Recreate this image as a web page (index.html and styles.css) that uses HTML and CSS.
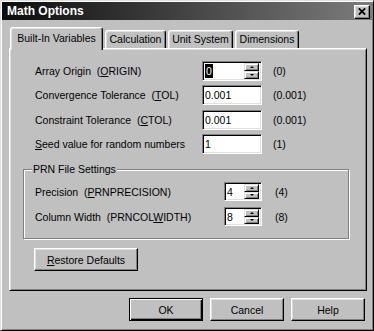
FILE: index.html
```html
<!DOCTYPE html>
<html lang="en">
<head>
    <meta charset="UTF-8">
    <title>Math Options</title>
    <link rel="stylesheet" href="styles.css">
</head>
<body>
    <div class="window">
        <div class="titlebar">
            <span class="title">Math Options</span>
            <button class="close" type="button">
                <svg width="8" height="7" viewBox="0 0 8 7"><path d="M0.8 0.3 L7.2 6.7 M7.2 0.3 L0.8 6.7" stroke="#000" stroke-width="1.7" fill="none"/></svg>
            </button>
        </div>
        <div class="content">
            <div class="tabs">
                <div class="tab active tab-vars">Built-In Variables</div>
                <div class="tab tab-calc">Calculation</div>
                <div class="tab tab-unit">Unit System</div>
                <div class="tab tab-dim">Dimensions</div>
            </div>
            <div class="panel">
                <div class="fields">
                    <label>Array Origin&nbsp; (<u>O</u>RIGIN)</label>
                    <div class="field spin"><span class="text"><span class="sel">0</span></span><span class="arrows"><span class="arrow"><i class="up"></i></span><span class="arrow"><i class="down"></i></span></span></div>
                    <span class="def">(0)</span>

                    <label>Convergence Tolerance&nbsp; (<u>T</u>OL)</label>
                    <div class="field"><span class="text">0.001</span></div>
                    <span class="def">(0.001)</span>

                    <label>Constraint Tolerance&nbsp; (<u>C</u>TOL)</label>
                    <div class="field"><span class="text">0.001</span></div>
                    <span class="def">(0.001)</span>

                    <label><u>S</u>eed value for random numbers</label>
                    <div class="field"><span class="text">1</span></div>
                    <span class="def">(1)</span>
                </div>

                <fieldset class="group">
                    <legend>PRN File Settings</legend>
                    <div class="group-fields">
                        <label>Precision&nbsp; (<u>P</u>RNPRECISION)</label>
                        <div class="field spin"><span class="text">4</span><span class="arrows"><span class="arrow"><i class="up"></i></span><span class="arrow"><i class="down"></i></span></span></div>
                        <span class="def">(4)</span>

                        <label>Column Width&nbsp; (PRNCOL<u>W</u>IDTH)</label>
                        <div class="field spin"><span class="text">8</span><span class="arrows"><span class="arrow"><i class="up"></i></span><span class="arrow"><i class="down"></i></span></span></div>
                        <span class="def">(8)</span>
                    </div>
                </fieldset>

                <button class="btn restore" type="button"><u>R</u>estore Defaults</button>
            </div>
            <div class="actions">
                <button class="btn default" type="button">OK</button>
                <button class="btn" type="button">Cancel</button>
                <button class="btn" type="button">Help</button>
            </div>
        </div>
    </div>
</body>
</html>
```

FILE: styles.css
```css
* {
    box-sizing: border-box;
}

body {
    margin: 0;
    font-family: "Liberation Sans", Arial, sans-serif;
    font-size: 10.5px;
    color: #000;
    background: #c0c0c0;
}

.window {
    width: 374px;
    height: 331px;
    background: #c0c0c0;
    border: 1px solid;
    border-color: #dfdfdf #000 #000 #dfdfdf;
    box-shadow: inset 1px 1px #fff, inset -1px -1px #808080;
    padding: 1px;
    display: flex;
    flex-direction: column;
}

.titlebar {
    height: 18px;
    display: flex;
    align-items: center;
    justify-content: space-between;
    padding: 0 2px 0 5px;
    background: linear-gradient(to right, #0c0c0c, #7c7c7c);
    color: #fff;
}

.title {
    font-weight: bold;
    font-size: 12px;
}

.close {
    width: 16px;
    height: 14px;
    padding: 0;
    margin-top: 1px;
    display: flex;
    align-items: center;
    justify-content: center;
    background: #c0c0c0;
    border: 1px solid;
    border-color: #fff #000 #000 #fff;
    box-shadow: inset -1px -1px #808080, inset 1px 1px #dfdfdf;
}

.content {
    padding: 7px 5px 0 7px;
}

/* tab strip */
.tabs {
    display: flex;
    align-items: flex-end;
    gap: 2px;
    height: 21px;
    padding-left: 1px;
}

.tab {
    height: 18px;
    line-height: 16px;
    text-align: center;
    border: 1px solid;
    border-bottom: none;
    border-color: #fff #000 transparent #fff;
    border-radius: 3px 3px 0 0;
    box-shadow: inset -1px 0 #808080, inset 1px 1px #dfdfdf;
    background: #c0c0c0;
}

.tab.active {
    position: relative;
    z-index: 1;
    height: 23px;
    line-height: 20px;
    margin-bottom: -2px;
}

.tab-vars { width: 93px; }
.tab-calc { width: 61px; }
.tab-unit { width: 65px; }
.tab-dim { width: 64px; }

.panel {
    height: 243px;
    padding: 12px 0 0 25px;
    border: 1px solid;
    border-color: #fff #000 #000 #fff;
    box-shadow: inset 1px 1px #dfdfdf, inset -1px -1px #808080;
}

.fields {
    display: grid;
    grid-template-columns: 167px 60px auto;
    grid-auto-rows: 20px;
    row-gap: 4.35px;
    align-items: center;
}

.def {
    margin-left: 11px;
}

/* sunken edit box */
.field {
    height: 100%;
    display: flex;
    align-items: center;
    padding: 0 2px;
    background: #fff;
    border: 1px solid;
    border-color: #808080 #fff #fff #808080;
    box-shadow: inset 1px 1px #000, inset -1px -1px #dfdfdf;
}

.field .text {
    flex: 1;
}

.sel {
    display: inline-block;
    background: #000;
    color: #fff;
    height: 14px;
    line-height: 14px;
    padding: 0 1px;
}

.spin {
    padding: 1px 2px 1px 2px;
    align-items: stretch;
}

.spin .text {
    display: flex;
    align-items: center;
}

.arrows {
    width: 15px;
    display: flex;
    flex-direction: column;
}

.arrow {
    flex: 1;
    display: flex;
    align-items: center;
    justify-content: center;
    background: #c0c0c0;
    border: 1px solid;
    border-color: #dfdfdf #000 #000 #dfdfdf;
    box-shadow: inset 1px 1px #fff, inset -1px -1px #808080;
}

.arrow i {
    width: 0;
    height: 0;
    border-left: 2px solid transparent;
    border-right: 2px solid transparent;
}

.arrow .up {
    border-bottom: 2px solid #000;
}

.arrow .down {
    border-top: 2px solid #000;
}

/* etched group box */
.group {
    width: 326px;
    margin: 9px 0 0 -12px;
    padding: 7px 0 12px 11px;
    border: 1px solid #808080;
    box-shadow: inset 1px 1px #fff, 1px 1px #fff;
}

.group legend {
    margin-left: -3px;
    padding: 0 1px;
    background: #c0c0c0;
}

.group-fields {
    display: grid;
    grid-template-columns: 189px 38px auto;
    grid-auto-rows: 19px;
    row-gap: 6px;
    align-items: center;
}

.group-fields .def {
    margin-left: 13px;
}

/* buttons */
.btn {
    height: 23px;
    width: 74px;
    padding: 0;
    font: inherit;
    color: #000;
    background: #c0c0c0;
    border: 1px solid;
    border-color: #fff #000 #000 #fff;
    box-shadow: inset -1px -1px #808080, inset 1px 1px #dfdfdf;
}

.btn.default {
    border-color: #000;
    box-shadow: inset 1px 1px #fff, inset -1px -1px #000, inset -2px -2px #808080;
}

.restore {
    display: block;
    width: 104px;
    margin: 9px 0 0 -1px;
}

.actions {
    display: flex;
    justify-content: flex-end;
    gap: 7px;
    margin-top: 7px;
    padding-right: 2px;
}
```
